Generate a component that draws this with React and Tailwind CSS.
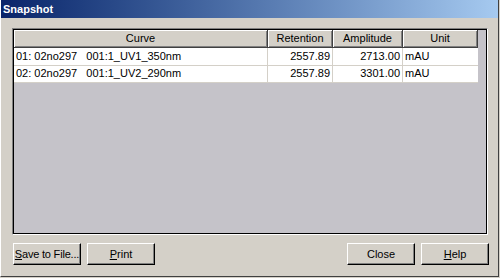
export default function App() {
  const font = { fontFamily: '"Liberation Sans", Arial, sans-serif' };
  const rows = [
    { c: "01: 02no297   001:1_UV1_350nm", r: "2557.89", a: "2713.00", u: "mAU" },
    { c: "02: 02no297   001:1_UV2_290nm", r: "2557.89", a: "3301.00", u: "mAU" },
  ];
  const hdr =
    "h-[18px] flex items-center justify-center bg-[#d4d0c8] border-r border-b border-[#404040] shadow-[inset_1px_1px_0_#ffffff,inset_-1px_-1px_0_#808080] text-black";
  const btn =
    "w-[68px] h-[22px] flex items-center justify-center whitespace-nowrap bg-[#d4d0c8] border border-t-white border-l-white border-r-black border-b-black shadow-[inset_-1px_-1px_0_#808080] text-black";
  return (
    <div className="w-[500px] h-[278px] bg-[#d4d0c8] text-[11px] text-black overflow-hidden" style={font}>
      <div className="w-[499px] h-[277px] flex flex-col border-r border-b border-[#404040] border-l border-l-white">
        <div className="h-[18px] flex items-center pl-[2px] bg-gradient-to-r from-[#0a246a] to-[#a6caf0] text-white font-bold text-[11px]">
          Snapshot
        </div>
        <div className="flex flex-col pl-[11px] pt-[10px]">
          <div className="w-[476px] h-[207px] border border-t-[#808080] border-l-[#808080] border-r-white border-b-white">
            <div className="w-full h-full border border-black bg-[#c5c3c9]">
              <div className="w-[464px]">
                <div className="grid grid-cols-[254px_65px_70px_75px]">
                  <div className={hdr}>Curve</div>
                  <div className={hdr}>Retention</div>
                  <div className={hdr}>Amplitude</div>
                  <div className={hdr}>Unit</div>
                </div>
                {rows.map((row, i) => (
                  <div key={i} className="grid grid-cols-[254px_65px_70px_75px] bg-white h-[17px]">
                    <div className="flex items-center pl-[2px] whitespace-pre border-r border-b border-[#d4d0c8]">{row.c}</div>
                    <div className="flex items-center justify-end pr-[2px] border-r border-b border-[#d4d0c8]">{row.r}</div>
                    <div className="flex items-center justify-end pr-[2px] border-r border-b border-[#d4d0c8]">{row.a}</div>
                    <div className="flex items-center pl-[2px] border-b border-[#d4d0c8]">{row.u}</div>
                  </div>
                ))}
              </div>
            </div>
          </div>
          <div className="flex mt-[8px] pl-[1px] w-[477px]">
            <div className={btn + " tracking-[-0.2px]"}><span><span className="underline">S</span>ave to File...</span></div>
            <div className={btn + " ml-[6px]"}><span><span className="underline">P</span>rint</span></div>
            <div className="flex-1" />
            <div className={btn}>Close</div>
            <div className={btn + " ml-[6px]"}><span><span className="underline">H</span>elp</span></div>
          </div>
        </div>
      </div>
    </div>
  );
}
